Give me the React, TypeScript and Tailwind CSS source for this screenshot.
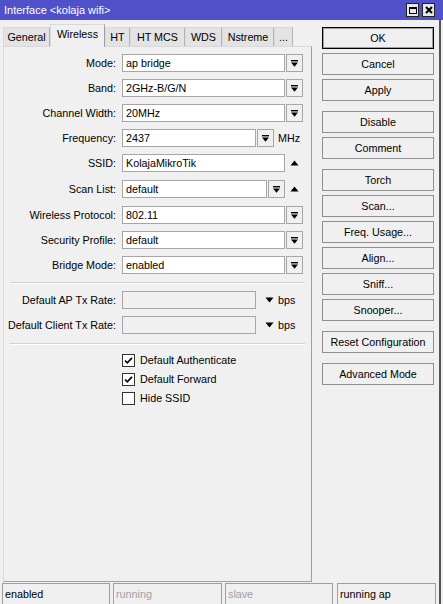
import React from "react";

function DropGlyph() {
  return (
    <svg width="9" height="9" viewBox="0 0 9 9">
      <rect x="1" y="1" width="7" height="1.4" fill="#000" />
      <path d="M1 3.6h7L4.5 7.8z" fill="#000" />
    </svg>
  );
}

function DropBtn() {
  return (
    <div className="ml-[1px] w-[17px] h-[18px] border border-[#a6a6a6] bg-[#f0f0f0] flex items-center justify-center shrink-0">
      <DropGlyph />
    </div>
  );
}

function UpTri() {
  return (
    <div className="w-[17px] h-[18px] flex items-center justify-center shrink-0 ml-[1px]">
      <svg width="9" height="6" viewBox="0 0 9 6">
        <path d="M0.5 5.5h8L4.5 0.5z" fill="#000" />
      </svg>
    </div>
  );
}

function Label({ children }: { children: React.ReactNode }) {
  return (
    <div className="w-[113px] shrink-0 text-right pr-[1px] whitespace-nowrap">{children}</div>
  );
}

function Input({ w, value, disabled }: { w: string; value?: string; disabled?: boolean }) {
  return (
    <div
      className={`${w} ml-[5px] h-[18px] border border-[#a6a6a6] ${disabled ? "bg-[#f0f0f0]" : "bg-white"} px-[3px] flex items-center shrink-0 whitespace-nowrap overflow-hidden`}
    >
      {value}
    </div>
  );
}

function Row({ mt, children }: { mt: string; children: React.ReactNode }) {
  return <div className={`${mt} flex items-center h-[18px]`}>{children}</div>;
}

function Btn({ mt, children, def }: { mt: string; children: React.ReactNode; def?: boolean }) {
  return (
    <div
      className={`${mt} w-[112px] h-[22px] shrink-0 flex items-center justify-center bg-[#f0f0f0] border ${def ? "border-black shadow-[inset_0_0_0_1px_#a0a0a0]" : "border-[#8f8f8f]"}`}
    >
      {children}
    </div>
  );
}

function Check({ checked, label, mt }: { checked: boolean; label: string; mt?: string }) {
  return (
    <div className={`${mt ?? ""} h-[19px] flex items-center pl-[118px]`}>
      <div className="w-[13px] h-[13px] border border-[#333] bg-white flex items-center justify-center shrink-0">
        {checked && (
          <svg width="9" height="9" viewBox="0 0 9 9">
            <path d="M1 4.5l2.3 2.3L8 1.8" stroke="#000" strokeWidth="1.7" fill="none" />
          </svg>
        )}
      </div>
      <span className="ml-[5px]">{label}</span>
    </div>
  );
}

function Separator({ mt }: { mt: string }) {
  return <div className={`${mt} mx-[6px] h-[2px] border-t border-[#d0d0d0] border-b border-b-white`} />;
}

function Tab({ w, label, selected }: { w: string; label: string; selected?: boolean }) {
  if (selected) {
    return (
      <div
        className={`${w} h-[23px] relative z-10 -mb-[1px] bg-[#f0f0f0] border-t border-l border-[#d9d9d9] border-r border-r-[#a0a0a0] flex items-start justify-center pt-[4px] shrink-0`}
      >
        {label}
      </div>
    );
  }
  return (
    <div
      className={`${w} h-[19px] bg-[#e3e3e3] border-t border-l border-[#d9d9d9] border-r border-r-[#b4b4b4] flex items-center justify-center shrink-0`}
    >
      {label}
    </div>
  );
}

function StatusCell({ w, ml, text, grey }: { w: string; ml: string; text: string; grey?: boolean }) {
  return (
    <div
      className={`${w} ${ml} h-[21px] border-t border-l border-r border-[#a0a0a0] pl-[2px] flex items-center shrink-0 ${grey ? "text-[#a0a0a0]" : "text-black"}`}
    >
      {text}
    </div>
  );
}

export default function App() {
  return (
    <div className="w-[443px] h-[604px] bg-[#f0f0f0] text-[10.75px] leading-none text-black font-['Liberation_Sans',Arial,sans-serif] flex flex-col overflow-hidden">
      {/* Title bar */}
      <div className="h-[20px] bg-[#5050c8] flex items-center pl-[4px] shrink-0">
        <span className="text-white text-[11px]">Interface &lt;kolaja wifi&gt;</span>
        <div className="ml-auto flex items-center mr-[8px]">
          <div className="w-[13px] h-[14px] bg-[#e8e8e8] border border-[#222] flex items-center justify-center">
            <div className="w-[8px] h-[7px] border border-black border-t-2" />
          </div>
          <div className="ml-[3px] w-[13px] h-[14px] bg-[#e8e8e8] border border-[#222] flex items-center justify-center">
            <svg width="8" height="8" viewBox="0 0 8 8">
              <path d="M1 1L7 7M7 1L1 7" stroke="#000" strokeWidth="2" />
            </svg>
          </div>
        </div>
      </div>

      <div className="flex flex-1">
        <div className="w-[439px] flex flex-col">
          {/* Body */}
          <div className="h-[563px] flex">
            {/* Left: tabs + panel */}
            <div className="ml-[3px] w-[309px] flex flex-col pt-[4px]">
              <div className="h-[22px] flex items-end">
                <Tab w="w-[47px]" label="General" />
                <Tab w="w-[55px]" label="Wireless" selected />
                <Tab w="w-[25px]" label="HT" />
                <Tab w="w-[55px]" label="HT MCS" />
                <Tab w="w-[37px]" label="WDS" />
                <Tab w="w-[52px]" label="Nstreme" />
                <Tab w="w-[19px]" label="..." />
              </div>
              <div className="h-[536px] border-t border-l border-[#d9d9d9] border-r border-r-[#a0a0a0] border-b border-b-[#a0a0a0] flex flex-col">
                <Row mt="mt-[7px]">
                  <Label>Mode:</Label>
                  <Input w="w-[163px]" value="ap bridge" />
                  <DropBtn />
                </Row>
                <Row mt="mt-[7px]">
                  <Label>Band:</Label>
                  <Input w="w-[163px]" value="2GHz-B/G/N" />
                  <DropBtn />
                </Row>
                <Row mt="mt-[7px]">
                  <Label>Channel Width:</Label>
                  <Input w="w-[163px]" value="20MHz" />
                  <DropBtn />
                </Row>
                <Row mt="mt-[7px]">
                  <Label>Frequency:</Label>
                  <Input w="w-[134px]" value="2437" />
                  <DropBtn />
                  <span className="ml-[4px]">MHz</span>
                </Row>
                <Row mt="mt-[7px]">
                  <Label>SSID:</Label>
                  <Input w="w-[163px]" value="KolajaMikroTik" />
                  <UpTri />
                </Row>
                <Row mt="mt-[8px]">
                  <Label>Scan List:</Label>
                  <Input w="w-[145px]" value="default" />
                  <DropBtn />
                  <UpTri />
                </Row>
                <Row mt="mt-[8px]">
                  <Label>Wireless Protocol:</Label>
                  <Input w="w-[163px]" value="802.11" />
                  <DropBtn />
                </Row>
                <Row mt="mt-[7px]">
                  <Label>Security Profile:</Label>
                  <Input w="w-[163px]" value="default" />
                  <DropBtn />
                </Row>
                <Row mt="mt-[7px]">
                  <Label>Bridge Mode:</Label>
                  <Input w="w-[163px]" value="enabled" />
                  <DropBtn />
                </Row>

                <Separator mt="mt-[8px]" />

                <Row mt="mt-[7px]">
                  <Label>Default AP Tx Rate:</Label>
                  <Input w="w-[134px]" disabled />
                  <svg className="ml-[9px]" width="9" height="6" viewBox="0 0 9 6">
                    <path d="M0.5 0.5h8L4.5 5.5z" fill="#000" />
                  </svg>
                  <span className="ml-[4px]">bps</span>
                </Row>
                <Row mt="mt-[7px]">
                  <Label>Default Client Tx Rate:</Label>
                  <Input w="w-[134px]" disabled />
                  <svg className="ml-[9px]" width="9" height="6" viewBox="0 0 9 6">
                    <path d="M0.5 0.5h8L4.5 5.5z" fill="#000" />
                  </svg>
                  <span className="ml-[4px]">bps</span>
                </Row>

                <Separator mt="mt-[9px]" />

                <Check mt="mt-[6px]" checked label="Default Authenticate" />
                <Check checked label="Default Forward" />
                <Check checked={false} label="Hide SSID" />
              </div>
            </div>

            {/* Right: buttons */}
            <div className="ml-[10px] flex flex-col">
              <Btn mt="mt-[7px]" def>OK</Btn>
              <Btn mt="mt-[4px]">Cancel</Btn>
              <Btn mt="mt-[4px]">Apply</Btn>
              <Btn mt="mt-[10px]">Disable</Btn>
              <Btn mt="mt-[4px]">Comment</Btn>
              <Btn mt="mt-[10px]">Torch</Btn>
              <Btn mt="mt-[4px]">Scan...</Btn>
              <Btn mt="mt-[4px]">Freq. Usage...</Btn>
              <Btn mt="mt-[4px]">Align...</Btn>
              <Btn mt="mt-[4px]">Sniff...</Btn>
              <Btn mt="mt-[4px]">Snooper...</Btn>
              <Btn mt="mt-[10px]">Reset Configuration</Btn>
              <Btn mt="mt-[10px]">Advanced Mode</Btn>
            </div>
          </div>

          {/* Status bar */}
          <div className="h-[21px] flex">
            <StatusCell w="w-[108px]" ml="ml-[2px]" text="enabled" />
            <StatusCell w="w-[109px]" ml="ml-[3px]" text="running" grey />
            <StatusCell w="w-[108px]" ml="ml-[3px]" text="slave" grey />
            <StatusCell w="w-[99px]" ml="ml-[4px]" text="running ap" />
          </div>
        </div>
        <div className="w-[2px] bg-[#555]" />
      </div>
    </div>
  );
}
